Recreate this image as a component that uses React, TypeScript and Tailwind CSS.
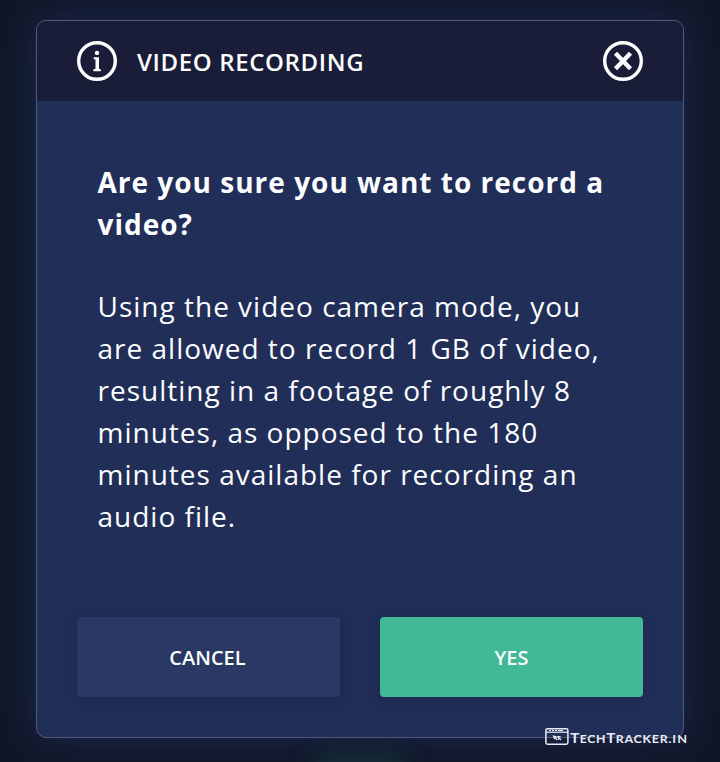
import React from "react";

function InfoIcon() {
  return (
    <svg className="size-10 shrink-0" viewBox="0 0 40 40" fill="none">
      <circle cx="20" cy="20" r="18.3" stroke="#fcfdff" strokeWidth="3.4" />
      <circle cx="20" cy="11.9" r="2.2" fill="#fcfdff" />
      <path d="M16.7 16.3H22V27.8L23.8 28.2V30.2H16.4V28.2L18.5 27.8V18.6L16.7 18.2Z" fill="#fcfdff" />
    </svg>
  );
}

function CloseIcon() {
  return (
    <svg className="size-10" viewBox="0 0 40 40" fill="none" stroke="#fcfdff">
      <circle cx="20" cy="20" r="18.3" strokeWidth="3.4" />
      <path d="M12.5 12.2L27.5 27.8M27.5 12.2L12.5 27.8" strokeWidth="4.4" />
    </svg>
  );
}

function Watermark() {
  return (
    <div className="absolute left-[545px] top-[727px] flex items-start text-[#e9edf7]">
      <svg className="h-[19px] w-6" viewBox="0 0 24 19" fill="none" stroke="currentColor">
        <rect x="0.9" y="1.7" width="22" height="15.5" rx="1.6" strokeWidth="1.5" />
        <path d="M1 5.2H23" strokeWidth="1.2" />
        <path d="M4 3.5H6M7 3.5H9M10 3.5H12M13 3.5H18" strokeWidth="1.1" />
        <path d="M7.6 8.2L11.8 9.2L11 10.4L12.8 12.6L11.7 13.4L10.1 11.6L9.2 12.5Z" fill="currentColor" stroke="none" />
        <path d="M11.8 9.6H15.6M13.6 9.6V12.8M14.4 11.2L16 13" strokeWidth="1.2" />
      </svg>
      <svg className="h-[20px] w-[122px]" viewBox="0 0 122 20" fill="currentColor">
        <g className="font-['Lato',sans-serif] font-bold">
          <text x="1.2" y="16" fontSize="13" textLength="9" lengthAdjust="spacingAndGlyphs">T</text>
          <text x="10.7" y="16" fontSize="10.4" textLength="26.5" lengthAdjust="spacingAndGlyphs" letterSpacing="0.6">ECH</text>
          <text x="37.2" y="16" fontSize="13" textLength="9" lengthAdjust="spacingAndGlyphs">T</text>
          <text x="46.7" y="16" fontSize="10.4" textLength="56.5" lengthAdjust="spacingAndGlyphs" letterSpacing="0.6">RACKER.</text>
          <text x="103.3" y="16" fontSize="10.4" textLength="16" lengthAdjust="spacingAndGlyphs" letterSpacing="1">IN</text>
        </g>
      </svg>
    </div>
  );
}

export default function App() {
  return (
    <main className="relative h-[762px] w-[720px] overflow-hidden bg-[#101726] px-9 pt-5 font-['Open_Sans',sans-serif] text-[#fcfdff]">
      <section className="relative flex h-[718px] w-[648px] flex-col overflow-hidden rounded-[10px] border border-[#505976] bg-[#212e57] shadow-[0_0_36px_2px_#1c2650]">
        <header className="flex h-20 shrink-0 items-center bg-[#1a1d37] px-10">
          <InfoIcon />
          <h1 className="ml-5 pt-[2px] text-2xl font-semibold tracking-[0.64px]">VIDEO RECORDING</h1>
          <button className="ml-auto" aria-label="Close">
            <CloseIcon />
          </button>
        </header>
        <div className="flex grow flex-col pl-[60.5px] pt-[60px] text-[28px] leading-[42px] tracking-[1px] whitespace-nowrap">
          <h2 className="font-bold">Are you sure you want to record a<br />video?</h2>
          <p className="mt-10">
            Using the video camera mode, you<br />
            are allowed to record 1 GB of video,<br />
            resulting in a footage of roughly 8<br />
            minutes, as opposed to the 180<br />
            minutes available for recording an<br />
            audio file.
          </p>
        </div>
        <footer className="grid grid-cols-2 gap-10 px-10 pb-10 text-xl font-semibold">
          <button className="h-20 rounded-[4px] bg-[#293963] pr-[2px] pt-[2px] shadow-[0_2px_10px_#17204580]">CANCEL</button>
          <button className="h-20 rounded-[4px] bg-[#41b995] pt-[2px] shadow-[0_2px_10px_#17204580]">YES</button>
        </footer>
      </section>
      <div className="absolute bottom-[-23px] left-[310px] h-[30px] w-[100px] rounded-full bg-[#17443f]/50 blur-[10px]" />
      <Watermark />
    </main>
  );
}
